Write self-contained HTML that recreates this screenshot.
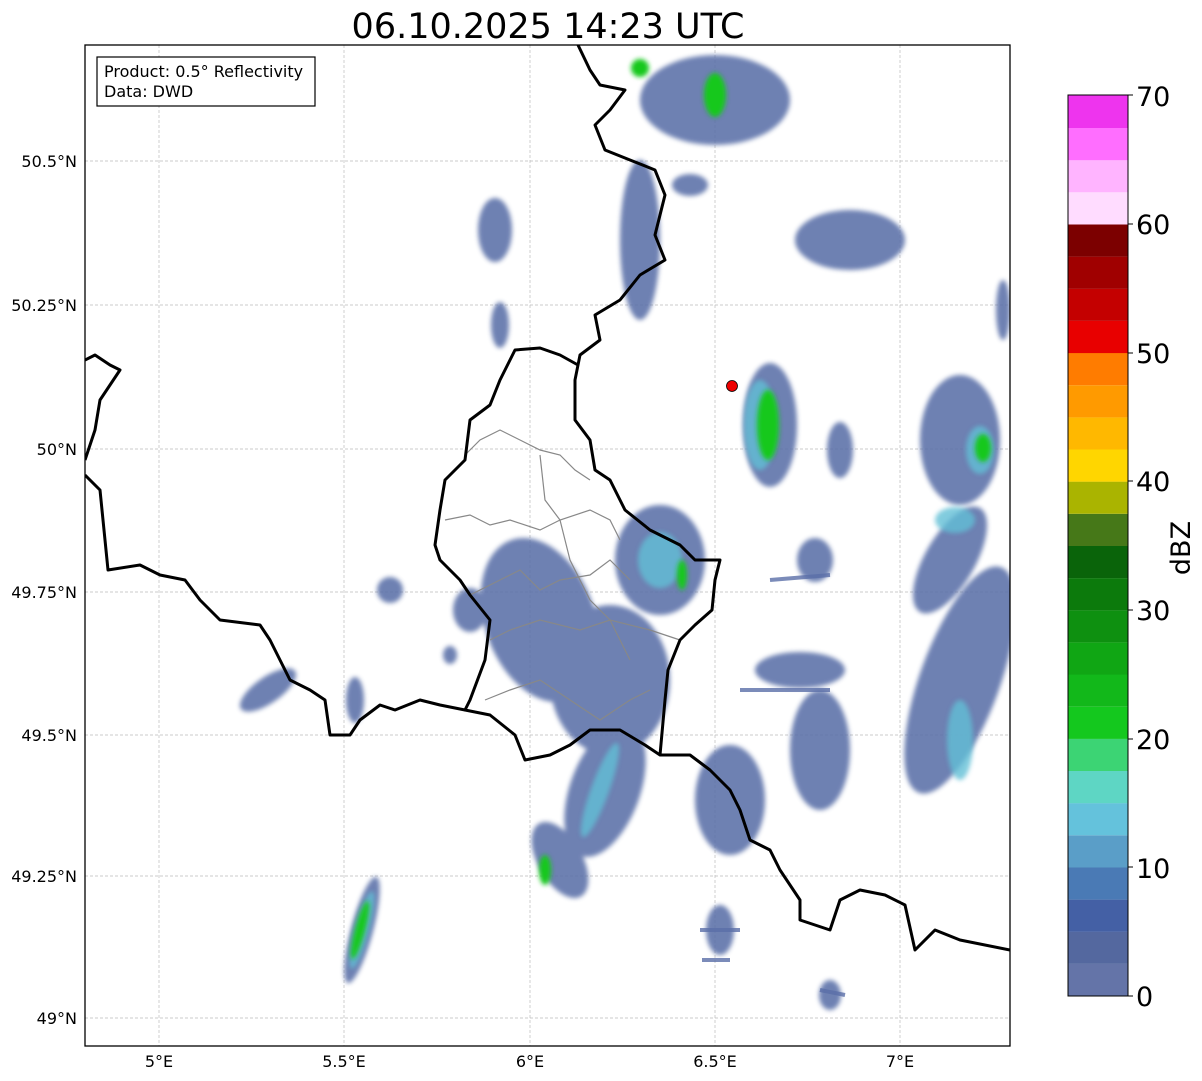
<!DOCTYPE html>
<html><head><meta charset="utf-8"><style>
body{margin:0;background:#fff;}
svg{display:block;font-family:"DejaVu Sans","Liberation Sans",sans-serif;}
</style></head><body>
<svg width="1202" height="1081" viewBox="0 0 1202 1081" xmlns="http://www.w3.org/2000/svg">
<defs>
<filter id="b" x="-20%" y="-20%" width="140%" height="140%"><feGaussianBlur stdDeviation="2.5"/></filter>
<clipPath id="c"><rect x="85" y="45" width="925" height="1001"/></clipPath>
</defs>
<rect width="1202" height="1081" fill="#fff"/>
<text x="548" y="38" font-size="35" text-anchor="middle" fill="#000">06.10.2025 14:23 UTC</text>
<g clip-path="url(#c)">
<g stroke="#bbb" stroke-width="0.7" stroke-dasharray="3,2">
<line x1="159" y1="45" x2="159" y2="1046"/><line x1="344" y1="45" x2="344" y2="1046"/><line x1="530" y1="45" x2="530" y2="1046"/><line x1="715" y1="45" x2="715" y2="1046"/><line x1="900" y1="45" x2="900" y2="1046"/>
<line x1="85" y1="161" x2="1010" y2="161"/><line x1="85" y1="305" x2="1010" y2="305"/><line x1="85" y1="449" x2="1010" y2="449"/><line x1="85" y1="592" x2="1010" y2="592"/><line x1="85" y1="735" x2="1010" y2="735"/><line x1="85" y1="876" x2="1010" y2="876"/><line x1="85" y1="1018" x2="1010" y2="1018"/>
</g>
<g filter="url(#b)" fill="#5a6fa8" opacity="0.88">
<ellipse cx="715" cy="100" rx="75" ry="45"/>
<ellipse cx="640" cy="240" rx="20" ry="80"/>
<ellipse cx="850" cy="240" rx="55" ry="30"/>
<ellipse cx="495" cy="230" rx="17" ry="32"/>
<ellipse cx="500" cy="325" rx="9" ry="23"/>
<ellipse cx="770" cy="425" rx="27" ry="62"/>
<ellipse cx="960" cy="440" rx="40" ry="65"/>
<ellipse cx="1003" cy="310" rx="7" ry="30"/>
<ellipse cx="540" cy="620" rx="55" ry="85" transform="rotate(-20 540 620)"/>
<ellipse cx="660" cy="560" rx="45" ry="55"/>
<ellipse cx="610" cy="680" rx="60" ry="75"/>
<ellipse cx="605" cy="790" rx="35" ry="70" transform="rotate(20 605 790)"/>
<ellipse cx="560" cy="860" rx="22" ry="42" transform="rotate(-30 560 860)"/>
<ellipse cx="730" cy="800" rx="35" ry="55"/>
<ellipse cx="820" cy="750" rx="30" ry="60"/>
<ellipse cx="800" cy="670" rx="45" ry="18"/>
<ellipse cx="960" cy="680" rx="40" ry="120" transform="rotate(20 960 680)"/>
<ellipse cx="950" cy="560" rx="25" ry="60" transform="rotate(30 950 560)"/>
<ellipse cx="815" cy="560" rx="18" ry="22"/>
<ellipse cx="268" cy="690" rx="13" ry="33" transform="rotate(55 268 690)"/>
<ellipse cx="355" cy="700" rx="9" ry="23"/>
<ellipse cx="362" cy="930" rx="11" ry="55" transform="rotate(15 362 930)"/>
<ellipse cx="470" cy="610" rx="17" ry="22"/>
<ellipse cx="720" cy="930" rx="14" ry="25"/>
<ellipse cx="830" cy="995" rx="11" ry="15"/>
<ellipse cx="390" cy="590" rx="13" ry="13"/>
<ellipse cx="450" cy="655" rx="7" ry="9"/>
<ellipse cx="690" cy="185" rx="18" ry="11"/>
<ellipse cx="840" cy="450" rx="13" ry="28"/>
</g>
<g stroke="#5a6fa8" stroke-width="4" opacity="0.8">
<line x1="700" y1="930" x2="740" y2="930"/><line x1="702" y1="960" x2="730" y2="960"/><line x1="820" y1="990" x2="845" y2="995"/><line x1="740" y1="690" x2="830" y2="690"/><line x1="770" y1="580" x2="830" y2="575"/>
</g>
<g filter="url(#b)" fill="#62bfd6" opacity="0.8">
<ellipse cx="660" cy="560" rx="22" ry="28"/>
<ellipse cx="600" cy="790" rx="9" ry="50" transform="rotate(20 600 790)"/>
<ellipse cx="955" cy="520" rx="20" ry="13"/>
<ellipse cx="960" cy="740" rx="13" ry="40"/>
<ellipse cx="362" cy="930" rx="7" ry="40" transform="rotate(15 362 930)"/>
<ellipse cx="980" cy="450" rx="14" ry="24"/>
<ellipse cx="760" cy="425" rx="16" ry="45"/>
</g>
<g filter="url(#b)" fill="#14c81e">
<ellipse cx="768" cy="425" rx="11" ry="35"/>
<ellipse cx="715" cy="95" rx="11" ry="22"/>
<ellipse cx="640" cy="68" rx="9" ry="9"/>
<ellipse cx="682" cy="575" rx="5" ry="15"/>
<ellipse cx="360" cy="930" rx="5" ry="30" transform="rotate(15 360 930)"/>
<ellipse cx="545" cy="870" rx="6" ry="15"/>
<ellipse cx="983" cy="448" rx="8" ry="14"/>
</g>
<g fill="none" stroke="#888" stroke-width="1.2">
<polyline points="465,455 480,440 500,430 520,440 540,450 560,455 575,470 590,480"/>
<polyline points="445,520 470,515 490,525 510,520 540,530 560,520 590,510 610,520 620,540"/>
<polyline points="470,595 500,580 520,570 540,590 560,580 590,575 610,560 630,580"/>
<polyline points="490,640 510,630 540,620 580,630 610,620 650,630 680,640"/>
<polyline points="485,700 510,690 540,680 570,700 600,720 630,700 650,690"/>
<polyline points="540,455 545,500 560,520 570,560 590,600 610,620 630,660"/>
</g>
<g fill="none" stroke="#000" stroke-width="3" stroke-linejoin="round">
<polyline points="578,45 590,70 600,85 625,90 610,110 595,125 605,150 630,160 655,170 665,195 655,235 665,260 640,275 620,300 595,315 600,340 580,355 575,380 575,420 590,440 595,470 610,480 625,510 650,530 680,545 695,560 720,560 715,580 712,610 695,625 680,640 668,670 665,700 660,755"/>
<polyline points="578,365 560,355 540,348 515,350 500,380 490,405 470,420 465,460 445,480 440,510 435,545 440,560 460,580 470,595 490,620 485,660 470,700 465,710 490,715 515,735 525,760 550,755 570,745 590,730 620,730 645,745 660,755 690,755 710,770 730,790 740,810 750,840 770,850 780,870 800,900 800,920 830,930 840,900 860,890 885,895 905,905 915,950 935,930 960,940 1010,950"/>
<polyline points="465,710 440,705 420,700 395,710 380,705 360,720 350,735 330,735 325,700 310,690 290,680 270,640 260,625 220,620 200,600 185,580 160,575 140,565 108,570 105,540 100,490 85,475"/>
<polyline points="85,360 95,355 110,365 120,370 100,400 95,430 85,460"/>
</g>
<circle cx="732" cy="386" r="5.5" fill="#e00" stroke="#000" stroke-width="0.8"/>
</g>
<rect x="85" y="45" width="925" height="1001" fill="none" stroke="#000" stroke-width="1.3"/>
<rect x="97" y="57" width="218" height="49" fill="#fff" stroke="#000" stroke-width="1.2"/>
<text x="104" y="77" font-size="16">Product: 0.5° Reflectivity</text>
<text x="104" y="97" font-size="16">Data: DWD</text>
<g font-size="16" text-anchor="end">
<text x="77" y="167">50.5°N</text><text x="77" y="311">50.25°N</text><text x="77" y="455">50°N</text><text x="77" y="598">49.75°N</text><text x="77" y="741">49.5°N</text><text x="77" y="882">49.25°N</text><text x="77" y="1024">49°N</text>
</g>
<g font-size="16" text-anchor="middle">
<text x="159" y="1067">5°E</text><text x="344" y="1067">5.5°E</text><text x="530" y="1067">6°E</text><text x="715" y="1067">6.5°E</text><text x="900" y="1067">7°E</text>
</g>
<g>
<rect x="1068" y="963.9" width="60" height="32.2" fill="#6474a8"/>
<rect x="1068" y="931.7" width="60" height="32.2" fill="#54689f"/>
<rect x="1068" y="899.6" width="60" height="32.2" fill="#4460a5"/>
<rect x="1068" y="867.4" width="60" height="32.2" fill="#4a7ab5"/>
<rect x="1068" y="835.3" width="60" height="32.2" fill="#5a9ec8"/>
<rect x="1068" y="803.1" width="60" height="32.2" fill="#64c2dc"/>
<rect x="1068" y="771" width="60" height="32.2" fill="#5ed6c4"/>
<rect x="1068" y="738.8" width="60" height="32.2" fill="#3cd474"/>
<rect x="1068" y="706.7" width="60" height="32.2" fill="#14c81e"/>
<rect x="1068" y="674.5" width="60" height="32.2" fill="#12b81a"/>
<rect x="1068" y="642.4" width="60" height="32.2" fill="#10a614"/>
<rect x="1068" y="610.2" width="60" height="32.2" fill="#0e9010"/>
<rect x="1068" y="578.1" width="60" height="32.2" fill="#0c7a0c"/>
<rect x="1068" y="545.9" width="60" height="32.2" fill="#0a640a"/>
<rect x="1068" y="513.8" width="60" height="32.2" fill="#467818"/>
<rect x="1068" y="481.6" width="60" height="32.2" fill="#aab400"/>
<rect x="1068" y="449.5" width="60" height="32.2" fill="#ffd600"/>
<rect x="1068" y="417.3" width="60" height="32.2" fill="#ffb800"/>
<rect x="1068" y="385.2" width="60" height="32.2" fill="#ff9a00"/>
<rect x="1068" y="353" width="60" height="32.2" fill="#ff7c00"/>
<rect x="1068" y="320.9" width="60" height="32.2" fill="#e80000"/>
<rect x="1068" y="288.7" width="60" height="32.2" fill="#c40000"/>
<rect x="1068" y="256.6" width="60" height="32.2" fill="#a00000"/>
<rect x="1068" y="224.4" width="60" height="32.2" fill="#7c0000"/>
<rect x="1068" y="192.3" width="60" height="32.2" fill="#ffdcff"/>
<rect x="1068" y="160.1" width="60" height="32.2" fill="#ffb4ff"/>
<rect x="1068" y="128" width="60" height="32.2" fill="#ff6eff"/>
<rect x="1068" y="95" width="60" height="33" fill="#ee34ee"/>
<rect x="1068" y="95" width="60" height="901" fill="none" stroke="#000" stroke-width="1"/>
</g>
<g font-size="27">
<text x="1136" y="1006">0</text><text x="1136" y="878">10</text><text x="1136" y="749">20</text><text x="1136" y="620">30</text><text x="1136" y="491">40</text><text x="1136" y="363">50</text><text x="1136" y="234">60</text><text x="1136" y="106">70</text>
</g>
<g stroke="#000" stroke-width="1">
<line x1="1128" y1="996" x2="1133" y2="996"/><line x1="1128" y1="867" x2="1133" y2="867"/><line x1="1128" y1="739" x2="1133" y2="739"/><line x1="1128" y1="610" x2="1133" y2="610"/><line x1="1128" y1="481" x2="1133" y2="481"/><line x1="1128" y1="353" x2="1133" y2="353"/><line x1="1128" y1="224" x2="1133" y2="224"/><line x1="1128" y1="95" x2="1133" y2="95"/>
</g>
<text x="1190" y="548" font-size="27" text-anchor="middle" transform="rotate(-90 1190 548)">dBZ</text>
</svg>
</body></html>
